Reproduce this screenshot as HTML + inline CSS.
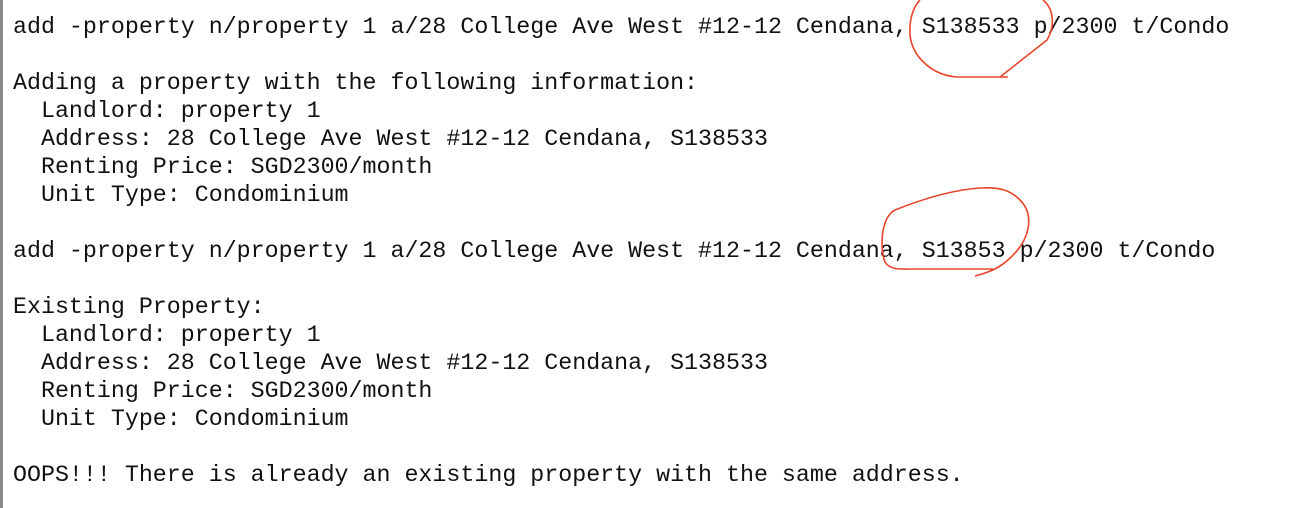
<!DOCTYPE html>
<html><head><style>
html,body{margin:0;padding:0;background:#fff;width:1302px;height:508px;overflow:hidden;position:relative}
.bar{position:absolute;left:0;top:0;width:3px;height:508px;background:#8a8a8a}
pre{position:absolute;left:13px;top:13px;margin:0;font-family:"Liberation Mono",monospace;font-size:23.3px;line-height:28px;color:#111}
svg{position:absolute;left:0;top:0}
</style></head><body>
<div class="bar"></div>
<pre>add -property n/property 1 a/28 College Ave West #12-12 Cendana, S138533 p/2300 t/Condo

Adding a property with the following information:
  Landlord: property 1
  Address: 28 College Ave West #12-12 Cendana, S138533
  Renting Price: SGD2300/month
  Unit Type: Condominium

add -property n/property 1 a/28 College Ave West #12-12 Cendana, S13853 p/2300 t/Condo

Existing Property:
  Landlord: property 1
  Address: 28 College Ave West #12-12 Cendana, S138533
  Renting Price: SGD2300/month
  Unit Type: Condominium

OOPS!!! There is already an existing property with the same address.</pre>
<svg width="1302" height="508" fill="none" stroke="#e8452c" stroke-width="1.6">
<path d="M1008,77 L957,77 C930,75 912,55 910,35 C909,18 914,6 920,0"/>
<path d="M1043,0 C1053,8 1056,25 1047,40 L1000,77"/>
<path d="M975,276 C990,272 1000,268 1010,258 C1030,240 1035,215 1020,200 C1010,190 1000,187 980,188 C950,190 920,200 895,210 C880,218 880,250 885,262 C890,270 900,269 910,269 L993,269"/>
</svg>
</body></html>
